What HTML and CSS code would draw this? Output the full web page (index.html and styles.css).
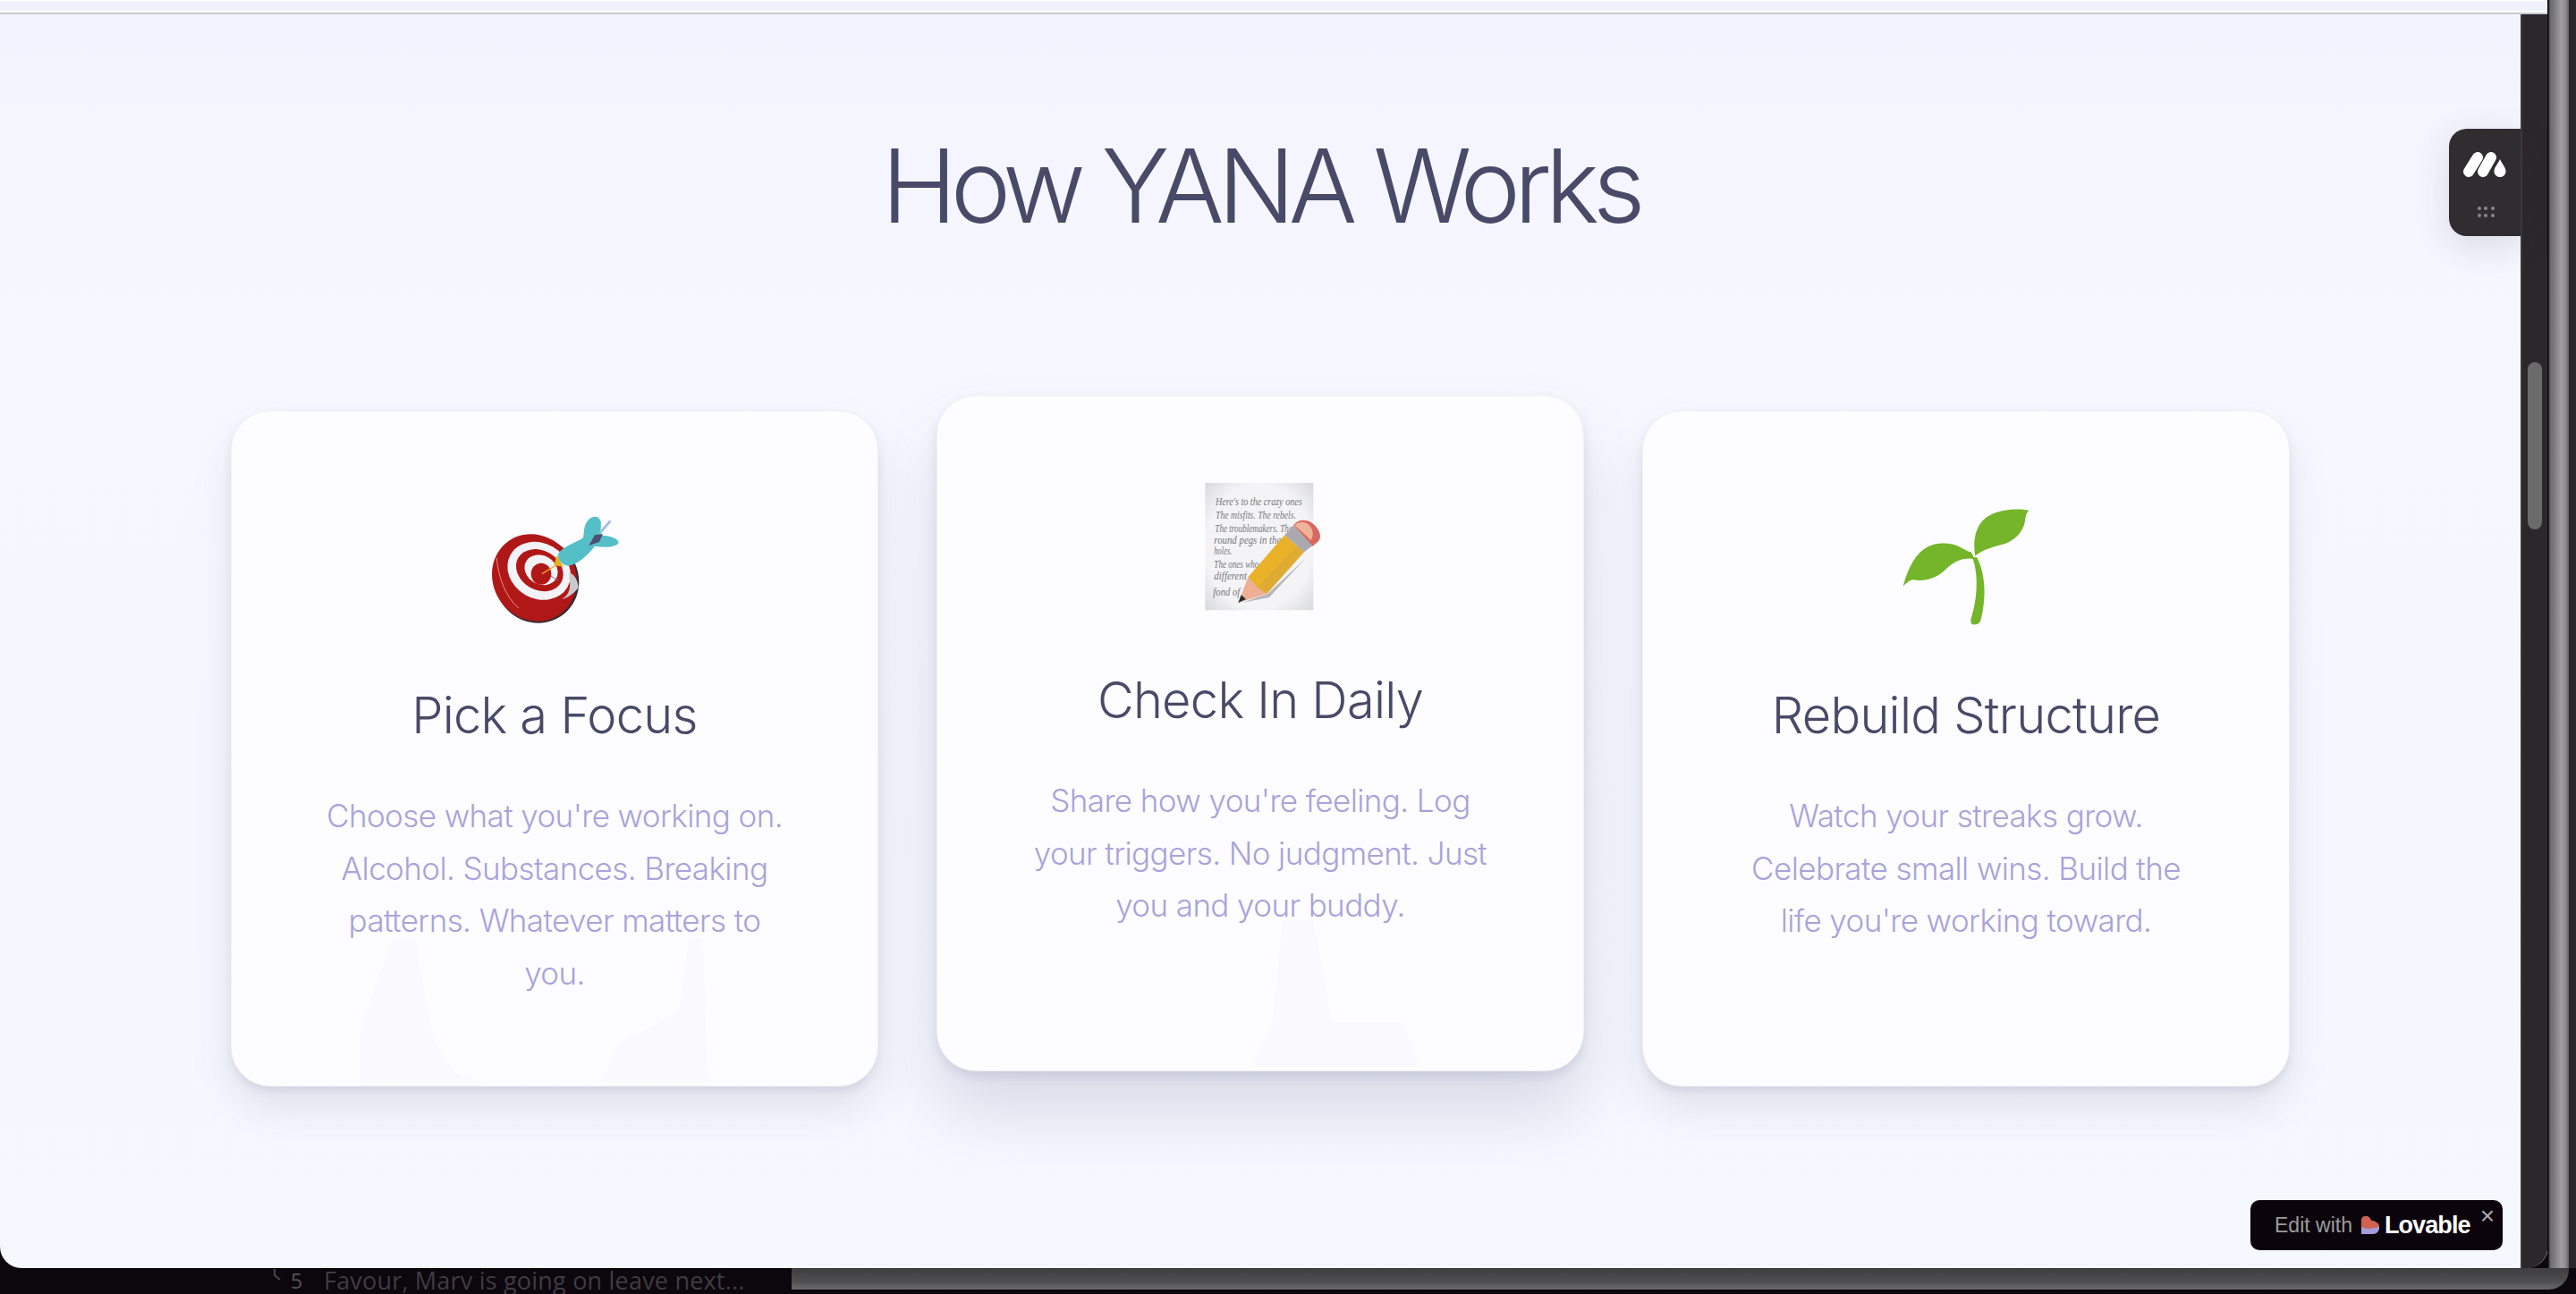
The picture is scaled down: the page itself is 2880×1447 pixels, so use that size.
FILE: index.html
```html
<!DOCTYPE html>
<html lang="en">
<head>
<meta charset="utf-8">
<title>How YANA Works</title>
<link rel="stylesheet" href="styles.css">
</head>
<body>
<div class="screen">
  <div class="upper">
    <div class="window">
      <div class="topbar"><div class="topbar-fill"></div></div>
      <div class="viewport">
        <main class="page">
          <h1 class="title">How YANA Works</h1>
          <section class="cards">
            <article class="card">
              <svg class="ghost" viewBox="0 0 722 754"><path d="M180 590L205 590L225 700L250 740L282 751L144 751L144 690Z"/><path d="M511 590L527 590L532 751L415 751L430 710L500 670Z"/></svg>
              <div class="icon-box">
                <svg class="dart" width="150" height="130" viewBox="195 210 450 390">
                  <ellipse cx="360" cy="446" rx="140" ry="146" fill="#3b2a33" transform="rotate(-35 360 446)"/>
                  <ellipse cx="352" cy="438" rx="138" ry="150" fill="#b01817" transform="rotate(-35 352 438)"/>
                  <path d="M226 372C230 430 255 505 300 540" fill="none" stroke="#e88d88" stroke-width="3"/>
                  <ellipse cx="368" cy="415" rx="110" ry="93" fill="#f3f2f6" transform="rotate(30 368 415)"/>
                  <ellipse cx="370" cy="413" rx="83" ry="66" fill="#b01817" transform="rotate(30 370 413)"/>
                  <ellipse cx="375" cy="412" rx="58" ry="48" fill="#f3f2f6" transform="rotate(30 375 412)"/>
                  <ellipse cx="375" cy="425" rx="34" ry="36" fill="#b01817"/>
                  <path d="M470 440C475 470 470 495 445 510C470 505 495 480 500 470C498 450 490 430 470 420Z" fill="#c9c9ce"/>
                  <path d="M408 432L432 448" stroke="#77777f" stroke-width="3"/>
                  <path d="M378 425L425 396" stroke="#e8b020" stroke-width="4"/>
                  <path d="M428 362L450 402L418 396Z" fill="#e8b020"/>
                  <path d="M432 358C450 332 490 322 516 304C520 290 515 270 530 248C545 228 570 228 575 250C578 268 570 285 580 296C600 296 635 305 635 320C630 335 590 338 555 332C530 365 495 395 465 398C445 396 430 378 432 358Z" fill="#55bfc8"/>
                  <path d="M575 285L605 250" stroke="#a9bfe0" stroke-width="9" stroke-linecap="round"/>
                  <path d="M535 330L555 295L582 292L570 318Z" fill="#4c4f70"/>
                </svg>
              </div>
              <h2 class="card-title">Pick a Focus</h2>
              <p class="card-text">Choose what you're working on. Alcohol. Substances. Breaking patterns. Whatever matters to you.</p>
            </article>
            <article class="card featured">
              <svg class="ghost" viewBox="0 0 722 754"><path d="M386 586L420 586L432 650L440 700L520 700L540 751L350 751L375 700Z"/></svg>
              <div class="icon-box">
                <svg class="memo" width="220" height="190" viewBox="0 39 660 570">
                  <defs>
                    <radialGradient id="paper" cx="50%" cy="50%" r="75%">
                      <stop offset="0.65" stop-color="#f4f4f6"/>
                      <stop offset="1" stop-color="#d2d3d7"/>
                    </radialGradient>
                  </defs>
                  <rect x="145" y="90" width="363" height="427" fill="url(#paper)"/>
                  <g class="script">
                    <text x="180" y="165" textLength="290" lengthAdjust="spacingAndGlyphs">Here's to the crazy ones</text>
                    <text x="180" y="210" textLength="270" lengthAdjust="spacingAndGlyphs">The misfits. The rebels.</text>
                    <text x="178" y="255" textLength="260" lengthAdjust="spacingAndGlyphs">The troublemakers. The</text>
                    <text x="175" y="295" textLength="225" lengthAdjust="spacingAndGlyphs">round pegs in the</text>
                    <text x="175" y="330" textLength="60" lengthAdjust="spacingAndGlyphs">holes.</text>
                    <text x="175" y="375" textLength="150" lengthAdjust="spacingAndGlyphs">The ones who</text>
                    <text x="175" y="415" textLength="110" lengthAdjust="spacingAndGlyphs">different</text>
                    <text x="172" y="468" textLength="90" lengthAdjust="spacingAndGlyphs">fond of</text>
                  </g>
                  <path d="M268 492L360 474L480 345L355 462Z" fill="#8e8e94" opacity=".6"/>
                  <path d="M256 492L290 405L352 462Z" fill="#edb095"/>
                  <path d="M256 492L266 466L282 480Z" fill="#2c2c30"/>
                  <path d="M290 405L412 265L477 322L352 462L320 440Z" fill="#e9b228"/>
                  <path d="M477 322L352 462L320 440L455 300Z" fill="#d9a83a" opacity=".6"/>
                  <path d="M412 265L442 232L506 300L477 322Z" fill="#a9a9ae"/>
                  <path d="M442 232C452 215 478 210 500 222C522 236 540 265 526 285L506 302Z" fill="#d9685e"/>
                  <path d="M445 232C455 220 476 218 490 228C505 240 512 262 500 282Z" fill="#efb39a"/>
                </svg>
              </div>
              <h2 class="card-title">Check In Daily</h2>
              <p class="card-text">Share how you're feeling. Log your triggers. No judgment. Just you and your buddy.</p>
            </article>
            <article class="card">
              <div class="icon-box">
                <svg class="sprout" width="220" height="190" viewBox="21 0 660 570">
                  <path fill="#74b52a" d="M140 347C150 310 170 250 210 222C245 198 290 198 325 212C345 222 360 232 368 232L380 255C345 248 312 262 285 288C255 318 220 332 172 325C158 328 150 338 140 347Z"/>
                  <path fill="#74b52a" d="M562 92C520 84 460 88 420 115C385 140 372 190 382 245C405 225 440 215 480 205C525 190 550 150 550 118C552 106 556 98 562 92Z"/>
                  <path fill="#74b52a" d="M372 250C392 300 392 380 368 455C364 472 372 476 384 475C396 474 400 465 403 450C418 385 418 310 388 250Z"/>
                </svg>
              </div>
              <h2 class="card-title">Rebuild Structure</h2>
              <p class="card-text">Watch your streaks grow. Celebrate small wins. Build the life you're working toward.</p>
            </article>
          </section>
          <aside class="widget">
            <svg class="widget-logo" width="48" height="28" viewBox="0 0 48 28">
              <path d="M6 22L16 6" stroke="#fff" stroke-width="12" stroke-linecap="round"/>
              <path d="M22 22L31 6" stroke="#fff" stroke-width="12" stroke-linecap="round"/>
              <path d="M41 8C43 13 47.500 17 47.500 21.500C47.500 25.500 44.500 28 41 28C37.500 28 34.500 25.500 34.500 21.500C34.500 17 39 13 41 8Z" fill="#fff"/>
            </svg>
            <div class="widget-dots"><i></i><i></i><i></i><i></i><i></i><i></i></div>
          </aside>
          <div class="badge">
            <span class="badge-edit">Edit with</span>
            <svg class="badge-heart" width="21" height="20" viewBox="0 0 21 20">
              <path d="M1 20V6C1 2 3 0 6 0C9 0 11 2 12 5C16 5 21 8 21 13C21 17 18 20 14 20Z" fill="#a39bd6"/>
              <path d="M1 12V6C1 2 3 0 6 0C9 0 11 2 12 5C16 5 21 8 21 11C16 14 6 15 1 12Z" fill="#d2604f"/>
            </svg>
            <span class="badge-brand">Lovable</span>
            <span class="badge-close">×</span>
          </div>
        </main>
        <div class="gutter"><div class="thumb"></div></div>
      </div>
    </div>
    <div class="frame-right"></div>
    <div class="edge"></div>
  </div>
  <div class="lower">
    <div class="notice">
      <svg class="notice-icon" width="10" height="14" viewBox="0 0 10 14"><path d="M2 1L2 8L8 13" fill="none" stroke="#4a464e" stroke-width="2"/></svg>
      <span class="notice-count">5</span><span class="notice-text">Favour, Marv is going on leave next...</span>
    </div>
    <div class="frame-bottom"></div>
  </div>
</div>
</body>
</html>
```
FILE: styles.css
```css
* { box-sizing: border-box; }
html, body { margin: 0; padding: 0; }
body {
  width: 2880px;
  height: 1447px;
  overflow: hidden;
  background: #0c060d;
  font-family: Inter, "Liberation Sans", sans-serif;
}
.screen { display: flex; flex-direction: column; height: 1447px; }
.upper { display: flex; height: 1418px; flex: none; }
.window {
  width: 2848px;
  flex: none;
  display: flex;
  flex-direction: column;
  border-radius: 0 0 24px 24px;
  overflow: hidden;
  box-shadow: 1px 0 0 #8f8f93;
}
.topbar { height: 16px; flex: none; background: #fff; padding-top: 1px; border-bottom: 2px solid #c9c9d3; }
.topbar-fill { height: 11px; background: #eff2fa; }
.viewport { flex: 1; display: flex; min-height: 0; }
.page {
  position: relative;
  width: 2818px;
  flex: none;
  background: linear-gradient(180deg, #f3f3ff 0%, #f7f8ff 30%, #f5f7fe 65%, #f5f8ff 100%);
  display: flex;
  flex-direction: column;
  align-items: center;
  padding-top: 122px;
}
.title {
  margin: 0;
  font-size: 114px;
  line-height: 140px;
  font-weight: 300;
  letter-spacing: -7.2px;
  color: #484a68;
}
.cards {
  display: flex;
  gap: 65px;
  margin-top: 181px;
}
.card {
  position: relative;
  width: 724px;
  height: 756px;
  background: #fdfdff;
  border: 1px solid #f0f0f6;
  border-radius: 44px;
  padding: 80px 100px 0;
  display: flex;
  flex-direction: column;
  align-items: center;
  box-shadow: 0 24px 48px rgba(70, 75, 110, 0.12), 0 6px 10px rgba(70, 75, 110, 0.1);
}
.card.featured {
  transform: translateY(-17px);
  box-shadow: 0 44px 72px rgba(70, 75, 110, 0.17), 0 6px 12px rgba(70, 75, 110, 0.12);
}
.ghost { position: absolute; left: 0; top: 0; width: 722px; height: 754px; }
.ghost path { fill: #faf9fd; }
.icon-box { height: 190px; flex: none; display: flex; align-items: center; justify-content: center; position: relative; }
.icon-box svg { display: block; }
.script text {
  font-family: "Liberation Serif", serif;
  font-style: italic;
  font-size: 38px;
  fill: #77777c;
}
.card-title {
  position: relative;
  margin: 36px 0 0;
  font-size: 56px;
  line-height: 68px;
  font-weight: 300;
  letter-spacing: -0.75px;
  color: #484a68;
  white-space: nowrap;
}
.card-text {
  position: relative;
  margin: 49px 0 0;
  font-size: 35px;
  line-height: 58.600px;
  font-weight: 300;
  letter-spacing: -0.6px;
  text-align: center;
  color: #a8a3db;
}
.widget {
  position: absolute;
  left: 2738px;
  top: 128px;
  width: 80px;
  height: 120px;
  background: #2f2d2f;
  border-radius: 20px 0 0 20px;
  box-shadow: 0 12px 40px rgba(50, 50, 70, 0.14);
  display: flex;
  flex-direction: column;
  align-items: center;
  padding-top: 26px;
}
.widget-logo { display: block; }
.widget-dots {
  display: grid;
  grid-template-columns: repeat(3, 4px);
  grid-auto-rows: 4px;
  gap: 3.500px;
  margin-top: 33px;
  margin-left: 2px;
}
.widget-dots i { background: #8a8a8a; border-radius: 50%; }
.badge {
  position: absolute;
  left: 2516px;
  top: 1326px;
  width: 282px;
  height: 56px;
  background: #0c040c;
  border-radius: 10px;
  display: flex;
  align-items: center;
  padding-left: 27px;
}
.badge-edit { font-size: 23px; font-weight: 400; color: #9b9b9b; white-space: nowrap; font-family: "Liberation Sans", sans-serif; }
.badge-heart { margin-left: 9px; flex: none; }
.badge-brand { margin-left: 6px; font-size: 27px; font-weight: 700; letter-spacing: -0.9px; color: #fff; font-family: "Liberation Sans", sans-serif; }
.badge-close {
  position: absolute;
  right: 9px;
  top: 0;
  font-size: 28px;
  line-height: 36px;
  color: #a9a9a9;
  font-family: "Liberation Sans", sans-serif;
}
.gutter {
  flex: 1;
  background: #2b272b;
  border-left: 2px solid #3a3a3a;
  padding: 389px 0 0 6px;
}
.thumb { width: 16px; height: 187px; border-radius: 8px; background: #6a6a6a; }
.frame-right {
  flex: 1;
  background: linear-gradient(90deg, #0c0a0c 0, #0c0a0c 1px, #6a6a6c 3px, #7a7a7c 30%, #a0a0a2 65%, #8c8c8e 85%, #5f5f61 100%);
}
.edge { width: 8px; flex: none; background: #2a262a; }
.lower { flex: 1; display: flex; align-items: flex-start; }
.notice {
  width: 885px;
  flex: none;
  height: 29px;
  display: flex;
  align-items: flex-start;
  padding-left: 305px;
  color: #3f3b43;
  font-family: "Open Sans", sans-serif;
  white-space: nowrap;
}
.notice-icon { flex: none; margin: 0 10px 0 0; }
.notice-count { font-size: 23px; line-height: 28px; width: 37px; color: #55525a; }
.notice-text { font-size: 27px; line-height: 27px; letter-spacing: 0.2px; }
.frame-bottom {
  width: 1987px;
  height: 24px;
  flex: none;
  background: linear-gradient(180deg, #3e3e40 0%, #4e4e50 60%, #6a6a6c 100%);
  border-bottom-right-radius: 22px;
}
```
